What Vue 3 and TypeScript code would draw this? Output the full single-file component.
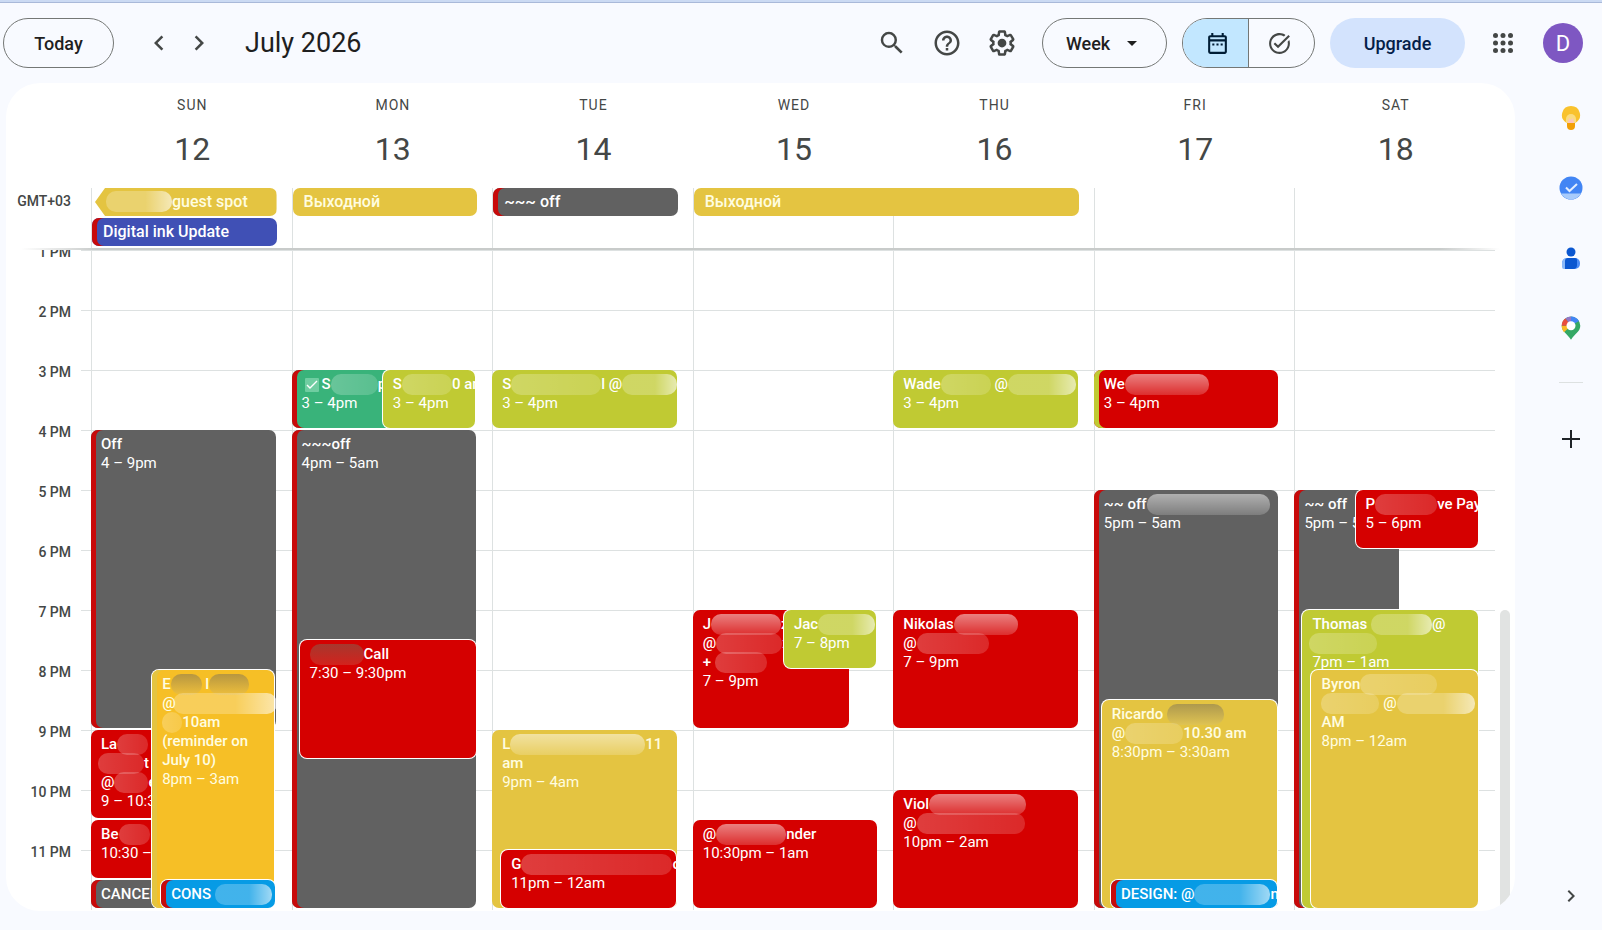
<script setup lang="ts">
import { ref } from 'vue'

type Tone = 'soft' | 'bright' | 'dim' | 'glow'
type Segment = string | { w: number; tone: Tone; back?: boolean }

interface CalendarEvent {
  start: number
  end: number
  color: string
  left?: number
  width?: number
  bar?: string
  raised?: boolean
  spill?: boolean
  square?: boolean
  task?: boolean
  lines: Segment[][]
  time?: string
}

interface Day {
  name: string
  date: number
  events: CalendarEvent[]
}

interface AllDayEvent {
  column: number
  span: number
  row: number
  color: string
  bar?: string
  continued?: boolean
  line: Segment[]
}

const view = ref('Week')
const pane = ref<'calendar' | 'tasks'>('calendar')

const firstHour = 13
const hours = Array.from({ length: 11 }, (_, i) => `${i + 1} PM`)

const m = (w: number, tone: Tone = 'soft', back = false): Segment => ({ w, tone, back })

const allDay: AllDayEvent[] = [
  { column: 1, span: 1, row: 1, color: 'gold', continued: true, line: [m(66, 'glow'), 'guest spot'] },
  { column: 1, span: 1, row: 2, color: 'indigo', bar: 'crimson', line: ['Digital ink Update'] },
  { column: 2, span: 1, row: 1, color: 'gold', line: ['Выходной'] },
  { column: 3, span: 1, row: 1, color: 'graphite', bar: 'crimson', line: ['~~~ off'] },
  { column: 4, span: 2, row: 1, color: 'gold', line: ['Выходной'] },
]

const days: Day[] = [
  {
    name: 'SUN',
    date: 12,
    events: [
      { start: 16, end: 21, color: 'graphite', bar: 'crimson', lines: [['Off']], time: '4 – 9pm' },
      {
        start: 21, end: 22.5, color: 'tomato', width: 50,
        lines: [['La', m(31)], [m(46, 'soft', true), 't'], ['@', m(34), 'e']],
        time: '9 – 10:30pm',
      },
      { start: 22.5, end: 23.5, color: 'tomato', width: 50, lines: [['Be', m(31)]], time: '10:30 – 11:30pm' },
      { start: 23.5, end: 24, color: 'graphite', bar: 'crimson', width: 50, lines: [['CANCELLED']] },
      {
        start: 20, end: 24, color: 'amber', bar: 'gold', left: 30.5, width: 61, raised: true, spill: true,
        lines: [
          ['E', m(31, 'dim'), ' l', m(40, 'dim')],
          ['@', m(104, 'glow', true)],
          [m(20), '10am'],
          ['(reminder on'],
          ['July 10)'],
        ],
        time: '8pm – 3am',
      },
      {
        start: 23.5, end: 24, color: 'sky', bar: 'crimson', left: 35, width: 56.5, raised: true,
        lines: [['CONS ', m(57, 'glow')]],
      },
    ],
  },
  {
    name: 'MON',
    date: 13,
    events: [
      {
        start: 15, end: 16, color: 'green', bar: 'crimson', width: 52, task: true,
        lines: [['S', m(47), 'p']], time: '3 – 4pm',
      },
      {
        start: 15, end: 16, color: 'lime', left: 45.5, width: 46, raised: true,
        lines: [['S', m(50), '0 am']], time: '3 – 4pm',
      },
      { start: 16, end: 24, color: 'graphite', bar: 'crimson', lines: [['~~~off']], time: '4pm – 5am' },
      {
        start: 19.5, end: 21.5, color: 'tomato', left: 4, width: 88, raised: true,
        lines: [[m(54, 'dim'), 'Call']], time: '7:30 – 9:30pm',
      },
    ],
  },
  {
    name: 'TUE',
    date: 14,
    events: [
      {
        start: 15, end: 16, color: 'lime', spill: true,
        lines: [['S', m(90), 'l @', m(55, 'glow')]], time: '3 – 4pm',
      },
      { start: 21, end: 24, color: 'gold', lines: [['L', m(135, 'bright'), '11'], ['am']], time: '9pm – 4am' },
      {
        start: 23, end: 24, color: 'tomato', left: 4.5, width: 87, raised: true,
        lines: [['G', m(151), 'o']], time: '11pm – 12am',
      },
    ],
  },
  {
    name: 'WED',
    date: 15,
    events: [
      {
        start: 19, end: 21, color: 'tomato', width: 78,
        lines: [['J', m(70, 'bright'), 'z'], ['@', m(66), 'x'], ['+ ', m(52)]],
        time: '7 – 9pm',
      },
      {
        start: 19, end: 20, color: 'lime', left: 45.5, width: 46, raised: true, spill: true,
        lines: [['Jac', m(57, 'glow')]], time: '7 – 8pm',
      },
      { start: 22.5, end: 24, color: 'tomato', lines: [['@', m(70, 'bright'), 'nder']], time: '10:30pm – 1am' },
    ],
  },
  {
    name: 'THU',
    date: 16,
    events: [
      {
        start: 15, end: 16, color: 'lime', spill: true,
        lines: [['Wade', m(50), ' @', m(68, 'glow')]], time: '3 – 4pm',
      },
      { start: 19, end: 21, color: 'tomato', lines: [['Nikolas', m(64, 'bright')], ['@', m(72)]], time: '7 – 9pm' },
      { start: 22, end: 24, color: 'tomato', lines: [['Viol', m(97, 'bright')], ['@', m(108)]], time: '10pm – 2am' },
    ],
  },
  {
    name: 'FRI',
    date: 17,
    events: [
      { start: 15, end: 16, color: 'tomato', bar: 'lime', lines: [['We', m(84, 'bright')]], time: '3 – 4pm' },
      {
        start: 17, end: 24, color: 'graphite', bar: 'crimson',
        lines: [['~~ off', m(123, 'bright')]], time: '5pm – 5am',
      },
      {
        start: 20.5, end: 24, color: 'gold', left: 4, width: 87.5, raised: true,
        lines: [['Ricardo ', m(57, 'dim')], ['@', m(58), '10.30 am']],
        time: '8:30pm – 3:30am',
      },
      {
        start: 23.5, end: 24, color: 'sky', bar: 'crimson', left: 8.5, width: 83, raised: true,
        lines: [['DESIGN: @', m(76, 'glow'), 'n']],
      },
    ],
  },
  {
    name: 'SAT',
    date: 18,
    events: [
      {
        start: 17, end: 24, color: 'graphite', bar: 'crimson', width: 52, square: true,
        lines: [['~~ off']], time: '5pm – 5am',
      },
      {
        start: 17, end: 18, color: 'tomato', left: 30.5, width: 61, raised: true,
        lines: [['P', m(62), 've Pay']], time: '5 – 6pm',
      },
      {
        start: 19, end: 24, color: 'lime', left: 4, width: 87.5, raised: true,
        lines: [['Thomas ', m(61, 'glow'), '@'], [m(68, 'soft', true)]],
        time: '7pm – 1am',
      },
      {
        start: 20, end: 24, color: 'gold', left: 8.5, width: 83, raised: true,
        lines: [['Byron', m(77)], [m(58), ' @', m(78, 'glow')], ['AM']],
        time: '8pm – 12am',
      },
    ],
  },
]

const eventStyle = (e: CalendarEvent) => ({
  gridRow: `${(e.start - firstHour) * 2 + 1} / ${(e.end - firstHour) * 2 + 1}`,
  marginLeft: `${e.left ?? 0}%`,
  width: `${e.width ?? 92}%`,
})

const chipStyle = (e: AllDayEvent) => ({
  gridRow: e.row,
  gridColumn: `${e.column} / span ${e.span}`,
})
</script>

<template>
  <div class="app">
    <header class="topbar">
      <button class="pill today" type="button">Today</button>
      <div class="pager">
        <button class="icon-button" type="button" aria-label="Previous week">
          <svg viewBox="0 0 24 24" width="30" height="30"><path d="M15.41 7.41 14 6l-6 6 6 6 1.41-1.41L10.83 12z" /></svg>
        </button>
        <button class="icon-button" type="button" aria-label="Next week">
          <svg viewBox="0 0 24 24" width="30" height="30"><path d="M10 6 8.59 7.41 13.17 12l-4.58 4.59L10 18l6-6z" /></svg>
        </button>
      </div>
      <h1>July 2026</h1>

      <div class="tools">
        <button class="icon-button" type="button" aria-label="Search">
          <svg viewBox="0 0 24 24" width="30" height="30"><path d="M15.5 14h-.79l-.28-.27A6.47 6.47 0 0 0 16 9.5 6.5 6.5 0 1 0 9.5 16c1.61 0 3.09-.59 4.23-1.57l.27.28v.79l5 4.99L20.49 19l-4.99-5zm-6 0C7.01 14 5 11.99 5 9.5S7.01 5 9.5 5 14 7.01 14 9.5 11.99 14 9.5 14z" /></svg>
        </button>
        <button class="icon-button" type="button" aria-label="Support">
          <svg viewBox="0 0 24 24" width="30" height="30"><path d="M11 18h2v-2h-2v2zm1-16C6.48 2 2 6.48 2 12s4.48 10 10 10 10-4.48 10-10S17.52 2 12 2zm0 18c-4.41 0-8-3.59-8-8s3.59-8 8-8 8 3.59 8 8-3.59 8-8 8zm0-14c-2.21 0-4 1.79-4 4h2c0-1.1.9-2 2-2s2 .9 2 2c0 2-3 1.75-3 5h2c0-2.25 3-2.5 3-5 0-2.21-1.79-4-4-4z" /></svg>
        </button>
        <button class="icon-button" type="button" aria-label="Settings">
          <svg viewBox="0 0 24 24" width="30" height="30"><path d="M13.85 22.25h-3.7c-.74 0-1.36-.54-1.45-1.27l-.27-1.89c-.27-.14-.53-.29-.79-.46l-1.8.72c-.7.26-1.47-.03-1.81-.65L2.2 15.53c-.35-.66-.2-1.44.36-1.88l1.53-1.19c-.01-.15-.02-.3-.02-.46 0-.15.01-.31.02-.46l-1.52-1.19c-.59-.45-.74-1.26-.37-1.88l1.85-3.19c.34-.62 1.11-.9 1.79-.63l1.81.73c.26-.17.52-.32.78-.46l.27-1.91c.09-.7.71-1.25 1.44-1.25h3.7c.74 0 1.36.54 1.45 1.27l.27 1.89c.27.14.53.29.79.46l1.8-.72c.71-.26 1.48.03 1.82.65l1.84 3.18c.36.66.2 1.44-.36 1.88l-1.52 1.19c.01.15.02.3.02.46s-.01.31-.02.46l1.52 1.19c.56.45.72 1.23.37 1.86l-1.86 3.22c-.34.62-1.11.9-1.8.63l-1.8-.72c-.26.17-.52.32-.78.46l-.27 1.91c-.1.68-.72 1.22-1.46 1.22zm-3.23-2h2.76l.37-2.55.53-.22c.44-.18.88-.44 1.34-.78l.45-.34 2.38.96 1.38-2.4-2.03-1.58.07-.56c.03-.26.06-.51.06-.78s-.03-.53-.06-.78l-.07-.56 2.03-1.58-1.39-2.4-2.39.96-.45-.35c-.42-.32-.87-.58-1.33-.77l-.52-.22-.37-2.55h-2.76l-.37 2.55-.53.21c-.44.19-.88.44-1.34.79l-.45.33-2.38-.95-1.39 2.39 2.03 1.58-.07.56a7 7 0 0 0-.06.79c0 .26.02.53.06.78l.07.56-2.03 1.58 1.38 2.4 2.39-.96.45.35c.43.33.86.58 1.33.77l.53.22.38 2.55z" /><circle cx="12" cy="12" r="3.5" /></svg>
        </button>
      </div>

      <div class="view-picker">
        <select v-model="view" class="pill" aria-label="Calendar view">
          <option>Day</option>
          <option>Week</option>
          <option>Month</option>
        </select>
        <svg class="caret" viewBox="0 0 10 5" width="10" height="5"><path d="M0 0h10L5 5z" /></svg>
      </div>

      <div class="switch">
        <button type="button" :class="{ active: pane === 'calendar' }" :aria-pressed="pane === 'calendar'" aria-label="Calendar" @click="pane = 'calendar'">
          <svg viewBox="0 0 24 24" width="25" height="25"><path d="M19 4h-1V2h-2v2H8V2H6v2H5c-1.11 0-1.99.9-1.99 2L3 20a2 2 0 0 0 2 2h14c1.1 0 2-.9 2-2V6c0-1.1-.9-2-2-2zm0 16H5V10h14v10zm0-12H5V6h14v2zM9 14H7v-2h2v2zm4 0h-2v-2h2v2zm4 0h-2v-2h2v2z" /></svg>
        </button>
        <button type="button" :class="{ active: pane === 'tasks' }" :aria-pressed="pane === 'tasks'" aria-label="Tasks" @click="pane = 'tasks'">
          <svg viewBox="0 0 24 24" width="25" height="25"><path d="M22 5.18 10.59 16.6l-4.24-4.24 1.41-1.41 2.83 2.83 10-10L22 5.18zm-2.21 5.04c.13.57.21 1.17.21 1.78 0 4.42-3.58 8-8 8s-8-3.58-8-8 3.58-8 8-8c1.58 0 3.04.46 4.28 1.25l1.44-1.44C16.1 2.67 14.13 2 12 2 6.48 2 2 6.48 2 12s4.48 10 10 10 10-4.48 10-10c0-1.19-.22-2.33-.6-3.39l-1.61 1.61z" /></svg>
        </button>
      </div>

      <button class="upgrade" type="button">Upgrade</button>
      <button class="icon-button" type="button" aria-label="Apps">
        <svg viewBox="0 0 24 24" width="30" height="30">
          <template v-for="y in [6, 12, 18]" :key="y">
            <circle v-for="x in [6, 12, 18]" :key="x" :cx="x" :cy="y" r="2" />
          </template>
        </svg>
      </button>
      <button class="avatar" type="button" aria-label="Account">D</button>
    </header>

    <div class="workspace">
      <main class="card">
        <div class="day-heads">
          <div v-for="day in days" :key="day.name" class="day-head">
            <span class="day-name">{{ day.name }}</span>
            <a class="day-date" href="#">{{ day.date }}</a>
          </div>
        </div>

        <div class="all-day">
          <div class="zone">GMT+03</div>
          <div class="all-day-grid">
            <div v-for="(day, i) in days" :key="day.name" class="slot" :style="{ gridColumn: i + 1 }"></div>
            <button
              v-for="(e, i) in allDay"
              :key="i"
              type="button"
              :class="['chip', e.color, e.bar && `bar-${e.bar}`, { continued: e.continued }]"
              :style="chipStyle(e)"
            >
              <template v-for="(s, k) in e.line" :key="k">
                <span v-if="typeof s === 'string'" class="txt">{{ s }}</span>
                <i v-else :class="['smudge', s.tone]" :style="{ width: s.w + 'px' }"></i>
              </template>
            </button>
          </div>
        </div>
        <div class="rule"></div>

        <div class="timeline">
          <div class="hours">
            <div v-for="h in hours" :key="h" class="hour"><span>{{ h }}</span></div>
          </div>
          <div class="columns">
            <section v-for="day in days" :key="day.name" class="column" :aria-label="`${day.name} ${day.date}`">
              <button
                v-for="(e, i) in day.events"
                :key="i"
                type="button"
                :class="['event', e.color, e.bar && `bar-${e.bar}`, { raised: e.raised, spill: e.spill, square: e.square }]"
                :style="eventStyle(e)"
              >
                <span v-for="(line, n) in e.lines" :key="n" class="line">
                  <svg v-if="e.task && n === 0" class="tick" viewBox="0 0 14 14" width="14" height="14">
                    <rect width="14" height="14" rx="1" fill="#6fcda1" />
                    <path d="m2 7 3 3 7-7" fill="none" stroke="#fff" stroke-width="1.4" />
                  </svg>
                  <template v-for="(s, k) in line" :key="k">
                    <span v-if="typeof s === 'string'" class="txt">{{ s }}</span>
                    <i v-else :class="['smudge', s.tone, { back: s.back }]" :style="{ width: s.w + 'px' }"></i>
                  </template>
                </span>
                <span v-if="e.time" class="time">{{ e.time }}</span>
              </button>
            </section>
          </div>
          <div class="scroll"><div class="thumb"></div></div>
        </div>
      </main>

      <aside class="side">
        <button type="button" aria-label="Keep">
          <svg viewBox="0 0 20 24" width="20" height="24">
            <path d="M10 0a9 9 0 0 0-5 16.500V17h10v-.5A9 9 0 0 0 10 0z" fill="#f9c22e" />
            <path d="M10 8a5 5 0 0 0-5 5v4h10v-4a5 5 0 0 0-5-5z" fill="#fbdc80" />
            <path d="m7 17 1-5 2 2 2-2 1 5z" fill="#fbc5bb" />
            <path d="M6 17h8v3a4 4 0 0 1-8 0z" fill="#f29f05" />
          </svg>
        </button>
        <button type="button" aria-label="Tasks panel">
          <svg viewBox="0 0 24 24" width="24" height="24">
            <circle cx="12" cy="12" r="11.500" fill="#4285f4" />
            <path d="M2 17.500h20a11.500 11.500 0 0 1-20 0z" fill="#a8cbfb" />
            <path d="m7 11.500 3.500 3.500L18 8" fill="none" stroke="#e3eeff" stroke-width="2" />
          </svg>
        </button>
        <button type="button" aria-label="Contacts">
          <svg viewBox="0 0 20 24" width="20" height="24">
            <circle cx="10" cy="6" r="4.500" fill="#0b57d0" />
            <rect x="1" y="12" width="18" height="11" rx="5" fill="#4c8df6" />
            <path d="M6 12a5 5 0 0 0-5 5v4a2 2 0 0 0 2 2h3z" fill="#8ab8f8" />
            <path d="M7 12h7a2 2 0 0 1 2 2v5a4 4 0 0 1-4 4H4v-8a3 3 0 0 1 3-3z" fill="#0b57d0" />
          </svg>
        </button>
        <button type="button" aria-label="Maps">
          <svg viewBox="0 0 20 24" width="20" height="24">
            <path d="M10 0.500a9.300 9.300 0 0 0-9.300 9.300c0 6 5.800 8.200 9.300 14 3.500-5.800 9.300-8 9.300-14A9.300 9.300 0 0 0 10 .5z" fill="#34a865" />
            <path d="M10 9.800 3 16.200C1.500 14.300.7 12.300.7 9.800z" fill="#f9b924" />
            <path d="M10 9.800H.7A9.300 9.300 0 0 1 4.500 2.300z" fill="#e94c3d" />
            <path d="M10 9.800 4.500 2.300A9.300 9.300 0 0 1 10 .5z" fill="#9277c8" />
            <path d="M10 9.800V.5a9.300 9.300 0 0 1 8 4.500z" fill="#4285f4" />
            <circle cx="10" cy="9.800" r="4.500" fill="#fff" />
          </svg>
        </button>
        <hr />
        <button type="button" aria-label="Get add-ons">
          <svg viewBox="0 0 18 18" width="18" height="18"><path d="M8 0h2v8h8v2h-8v8H8v-8H0V8h8z" fill="#1f2328" /></svg>
        </button>
        <button class="collapse" type="button" aria-label="Hide side panel">
          <svg viewBox="0 0 24 24" width="24" height="24"><path d="M10 6 8.590 7.410 13.170 12l-4.580 4.590L10 18l6-6z" /></svg>
        </button>
      </aside>
    </div>
  </div>
</template>

<style>
body {
  margin: 0;
  background: #f8faff;
}
</style>

<style scoped>
.app {
  display: flex;
  flex-direction: column;
  min-height: 100vh;
  box-sizing: border-box;
  border-top: 2px solid #cbdaf3;
  background: #f8faff;
  color: #1f1f1f;
  font-family: Roboto, "Noto Sans", sans-serif;
  font-size: 15px;
}

button,
select {
  margin: 0;
  padding: 0;
  border: 0;
  background: none;
  color: inherit;
  font: inherit;
  cursor: pointer;
}

svg {
  display: block;
  fill: currentColor;
}

/* Top bar */
.topbar {
  display: flex;
  align-items: center;
  height: 80px;
  padding: 0 19px 0 3px;
  border-top: 1px solid #a9b9d9;
}

.pill {
  height: 50px;
  box-sizing: border-box;
  border: 1px solid #747775;
  border-radius: 25px;
  font-size: 18px;
  font-weight: 500;
}

.today {
  width: 111px;
}

.pager {
  display: flex;
  margin-left: 25px;
}

.icon-button {
  display: grid;
  place-items: center;
  width: 40px;
  height: 40px;
  color: #444746;
}

h1 {
  margin: 0 0 0 26px;
  font-size: 27px;
  font-weight: 400;
}

.tools {
  display: flex;
  gap: 15px;
  margin-left: auto;
}

.view-picker {
  display: grid;
  align-items: center;
  margin-left: 20px;
}

.view-picker select {
  grid-area: 1 / 1;
  width: 125px;
  padding: 0 23px;
  appearance: none;
}

.caret {
  grid-area: 1 / 1;
  justify-self: end;
  margin-right: 30px;
  pointer-events: none;
}

.switch {
  display: flex;
  width: 133px;
  height: 50px;
  box-sizing: border-box;
  margin-left: 15px;
  overflow: hidden;
  border: 1px solid #747775;
  border-radius: 25px;
}

.switch button {
  display: grid;
  flex: 1;
  place-items: center;
  padding-right: 4px;
  color: #444746;
}

.switch button + button {
  border-left: 1px solid #747775;
}

.switch .active {
  padding: 0 0 0 4px;
  background: #c2e7ff;
  color: #001d35;
}

.upgrade {
  width: 135px;
  height: 50px;
  margin: 0 18px 0 15px;
  border-radius: 25px;
  background: #d3e3fd;
  color: #041e49;
  font-size: 18px;
  font-weight: 500;
}

.avatar {
  width: 40px;
  height: 40px;
  margin-left: 20px;
  border-radius: 50%;
  background: #7e57c2;
  color: #fff;
  font-size: 22px;
}

/* Calendar card */
.workspace {
  display: flex;
  flex: 1;
}

.card {
  flex: 1;
  align-self: flex-start;
  margin: 0 0 19px 6px;
  overflow: hidden;
  border-radius: 34px;
  background: #fff;
  color: #444746;
}

.day-heads {
  display: grid;
  grid-template-columns: repeat(7, 1fr);
  height: 105px;
  padding: 0 19px 0 86px;
}

.day-head {
  display: flex;
  flex-direction: column;
  align-items: center;
  padding-top: 12px;
}

.day-name {
  font-size: 14px;
  line-height: 20px;
  letter-spacing: 1px;
}

.day-date {
  margin-top: 14px;
  color: inherit;
  font-size: 32px;
  line-height: 40px;
  text-decoration: none;
}

.all-day {
  display: flex;
  padding-right: 20px;
}

.zone {
  width: 65px;
  padding-right: 20px;
  font-size: 14px;
  font-weight: 500;
  line-height: 26px;
  text-align: right;
}

.all-day-grid {
  display: grid;
  flex: 1;
  grid-template-rows: 28px 28px 0;
  grid-template-columns: repeat(7, 1fr);
  row-gap: 2px;
}

.slot {
  grid-row: 1 / -1;
  border-left: 1px solid #dde1e1;
}

.chip {
  display: flex;
  align-items: center;
  margin: 0 15px 0 1px;
  padding: 0 11px 2px;
  overflow: hidden;
  border-radius: 7px;
  color: #fff;
  font-size: 16px;
  font-weight: 500;
}

.chip.continued {
  margin-left: 4px;
  clip-path: polygon(0 50%, 10px 0, 100% 0, 100% 100%, 10px 100%);
}

.rule {
  height: 2px;
  background: linear-gradient(90deg, transparent 1%, #c8cbca 6%, #c8cbca 95%, transparent 99%);
}

/* Time grid */
.timeline {
  display: flex;
  padding-bottom: 1px;
  overflow: hidden;
}

.hours {
  width: 65px;
  padding-right: 10px;
}

.hour {
  display: flex;
  justify-content: flex-end;
  height: 60px;
  font-size: 14px;
  font-weight: 500;
}

.hour span {
  margin-top: -8px;
  line-height: 20px;
}

.columns {
  display: grid;
  flex: 1;
  grid-template-columns: repeat(7, 1fr);
  padding-left: 10px;
  background: repeating-linear-gradient(#dde1e1 0 1px, transparent 1px 60px);
}

.column {
  display: grid;
  grid-template-rows: repeat(22, 30px);
  grid-template-columns: 100%;
  min-width: 0;
  background: linear-gradient(#dde1e1, #dde1e1) left / 1px 100% no-repeat;
}

.event {
  display: flex;
  flex-direction: column;
  grid-column: 1;
  box-sizing: border-box;
  margin-bottom: 2px;
  padding: 5px 0 0 10px;
  overflow: hidden;
  border-radius: 7px;
  color: #fff;
  line-height: 19px;
  text-align: left;
  white-space: pre;
}

.event.raised {
  box-shadow: 0 0 0 1px #fff;
}

.event.spill {
  overflow: visible;
}

.event.square {
  border-radius: 7px 0 0 7px;
}

.line {
  display: flex;
  flex: none;
  align-items: center;
  height: 19px;
  font-weight: 500;
}

.time {
  flex: none;
}

.txt {
  white-space: pre;
}

.tick {
  flex: none;
  margin: 0 3px;
}

.smudge {
  flex: none;
  height: 21px;
  border-radius: 10px;
}

.smudge.back {
  margin-left: -3px;
}

.smudge.soft {
  background: linear-gradient(90deg, rgba(255, 255, 255, 0.24), rgba(255, 255, 255, 0.16));
}

.smudge.bright {
  background: linear-gradient(rgba(255, 255, 255, 0.5), rgba(255, 255, 255, 0.18));
}

.smudge.dim {
  background: linear-gradient(rgba(120, 110, 90, 0.5), rgba(200, 190, 160, 0.18));
}

.smudge.glow {
  background: linear-gradient(90deg, rgba(255, 255, 255, 0.24) 60%, rgba(255, 255, 255, 0.62));
}

.gold { background: #e4c441; }
.amber { background: #f6bf26; }
.indigo { background: #4050b5; }
.graphite { background: #616161; }
.tomato { background: #d50000; }
.lime { background: #c0ca33; }
.green { background: #39b37a; }
.sky { background: #069be5; }

.event.gold,
.event.amber,
.chip.gold {
  color: #fffde0;
}

.bar-crimson { box-shadow: inset 5px 0 #c80a0a; }
.bar-lime { box-shadow: inset 5px 0 #c0ca33; }
.raised.bar-crimson { box-shadow: 0 0 0 1px #fff, inset 5px 0 #c80a0a; }
.raised.bar-gold { box-shadow: 0 0 0 1px #fff, inset 5px 0 #e4c441; }

.scroll {
  display: flex;
  align-items: flex-end;
  width: 15px;
  padding-left: 5px;
}

.thumb {
  width: 10px;
  height: 300px;
  border-radius: 5px 5px 0 0;
  background: #e1e3e2;
}

/* Side panel */
.side {
  display: flex;
  flex-direction: column;
  align-items: center;
  width: 63px;
  padding: 15px 0 14px 24px;
  color: #444746;
}

.side button {
  display: grid;
  place-items: center;
  width: 40px;
  height: 40px;
  margin-bottom: 30px;
}

.side hr {
  width: 24px;
  margin: 4px 0 36px;
  border: 0;
  border-top: 1px solid #dde1e1;
}

.side .collapse {
  margin: auto 0 0;
}
</style>
